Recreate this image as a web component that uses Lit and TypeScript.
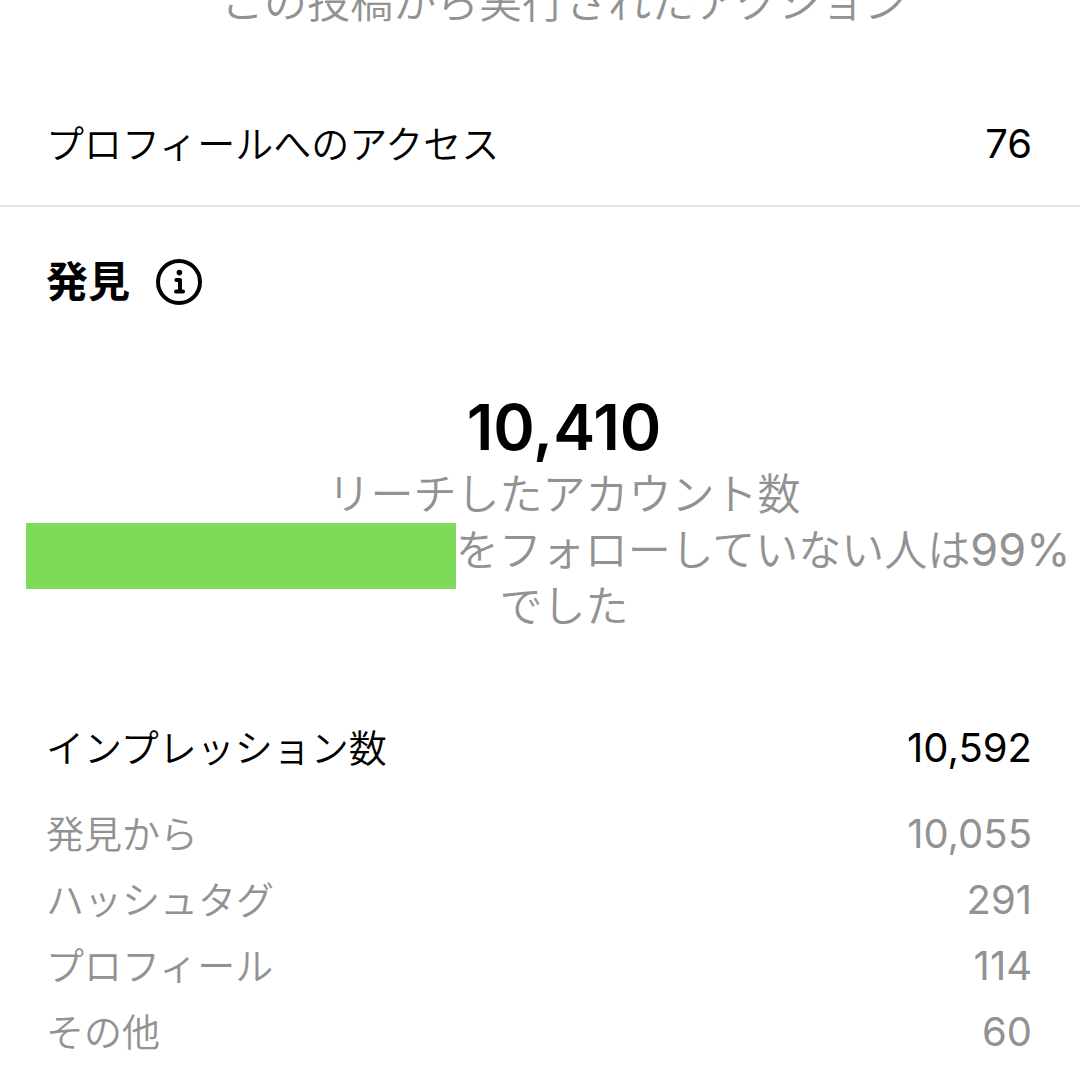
import { LitElement, html, css } from "lit";
import { customElement, property } from "lit/decorators.js";

interface Stat {
  label: string;
  value: string;
}

const sources: Stat[] = [
  { label: "発見から", value: "10,055" },
  { label: "ハッシュタグ", value: "291" },
  { label: "プロフィール", value: "114" },
  { label: "その他", value: "60" },
];

@customElement("stat-row")
export class StatRow extends LitElement {
  static styles = css`
    :host {
      display: flex;
      justify-content: space-between;
      align-items: center;
      font-size: 38px;
      line-height: 66px;
    }
    .label {
      font-weight: 350;
    }
    .value {
      font-size: 40px;
    }
  `;

  @property() label = "";
  @property() value = "";

  render() {
    return html`
      <span class="label">${this.label}</span>
      <span class="value">${this.value}</span>
    `;
  }
}

@customElement("app-root")
export class AppRoot extends LitElement {
  static styles = css`
    :host {
      display: block;
      overflow: hidden;
      background: #fff;
      color: #000;
      font-family: Inter, "Noto Sans CJK JP", sans-serif;
    }
    .actions {
      padding-bottom: 28px;
      border-bottom: 2px solid #e4e4e4;
    }
    .caption {
      margin: 0;
      padding-left: 48px;
      color: #929292;
      font-size: 43px;
      font-weight: 350;
      line-height: 56px;
      text-align: center;
    }
    .percent {
      font-size: 45px;
      font-weight: 400;
      line-height: 1;
    }
    .actions .caption {
      margin-top: -26px;
      margin-bottom: 81px;
    }
    .rows {
      padding: 0 48px 0 46px;
    }
    .header {
      display: flex;
      align-items: center;
      gap: 25px;
      padding: 47px 46px 0;
    }
    .title {
      margin: 0;
      font-size: 42px;
      line-height: 56px;
      font-weight: 700;
    }
    .info {
      display: flex;
      padding: 0;
      border: 0;
      background: none;
      color: inherit;
    }
    .total {
      margin: 81px 0 0;
      padding-left: 48px;
      font-size: 63px;
      line-height: 72px;
      font-weight: 600;
      text-align: center;
    }
    .redacted {
      display: inline-block;
      width: 430px;
      height: 66px;
      margin: -8px 0 -12px -32px;
      vertical-align: middle;
      background: #7edb59;
    }
    .summary {
      margin-top: 3px;
    }
    .impressions {
      margin-top: 81px;
    }
    .sources {
      margin-top: 20px;
      padding-bottom: 16px;
      color: #929292;
    }
  `;

  render() {
    return html`
      <main>
        <section class="actions">
          <p class="caption">この投稿から実行されたアクション</p>
          <div class="rows">
            <stat-row label="プロフィールへのアクセス" value="76"></stat-row>
          </div>
        </section>

        <section>
          <header class="header">
            <h2 class="title">発見</h2>
            <button class="info" type="button" aria-label="発見について">
              <svg width="48" height="48" viewBox="0 0 48 48" fill="none" stroke="currentColor" aria-hidden="true">
                <circle cx="24" cy="24" r="21" stroke-width="4" />
                <circle cx="24.4" cy="14.6" r="2.8" fill="currentColor" stroke="none" />
                <path d="M21.4 22H25V33M21 33.4H28" stroke-width="4" stroke-linecap="round" stroke-linejoin="round" />
              </svg>
            </button>
          </header>

          <p class="total">10,410</p>
          <div class="summary">
            <p class="caption">リーチしたアカウント数</p>
            <p class="caption">
              <span class="redacted"></span>をフォローしていない人は<span class="percent">99%</span><br />でした
            </p>
          </div>

          <div class="rows impressions">
            <stat-row label="インプレッション数" value="10,592"></stat-row>
          </div>
          <div class="rows sources">
            ${sources.map((s) => html`<stat-row .label=${s.label} .value=${s.value}></stat-row>`)}
          </div>
        </section>
      </main>
    `;
  }
}
